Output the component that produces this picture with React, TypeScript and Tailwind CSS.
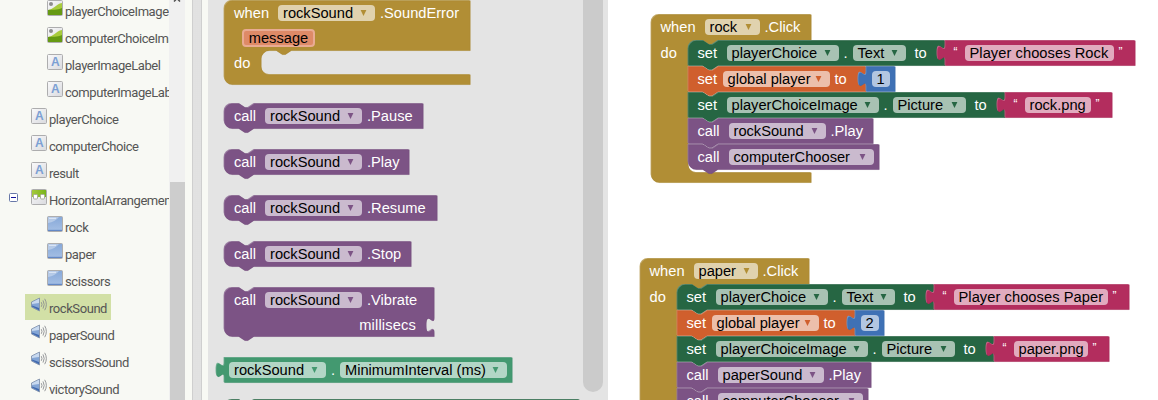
import React from "react";

type Color = "gold" | "purple" | "green" | "orange" | "pink" | "blue" | "mint";

const palette: Record<Color, { fill: string; light: string; dark: string; arrow: string }> = {
  gold: { fill: "#b18e35", light: "#c8b072", dark: "#8e722a", arrow: "text-[#b18e35]" },
  purple: { fill: "#7c5385", light: "#a387aa", dark: "#63426a", arrow: "text-[#7c5385]" },
  green: { fill: "#266643", light: "#67947b", dark: "#1e5236", arrow: "text-[#266643]" },
  orange: { fill: "#d05f2d", light: "#de8f6c", dark: "#a64c24", arrow: "text-[#d05f2d]" },
  pink: { fill: "#b32d5e", light: "#ca6c8e", dark: "#8f244b", arrow: "text-[#b32d5e]" },
  blue: { fill: "#3f71b5", light: "#799ccb", dark: "#325a91", arrow: "text-[#3f71b5]" },
  mint: { fill: "#439970", light: "#7bb89b", dark: "#367a5a", arrow: "text-[#439970]" },
};

function statementPath(w: number, h: number, roundTop = true, roundBottom = true) {
  const start = roundTop ? "M0,8 A8,8 0 0 1 8,0" : "M0,0";
  const end = roundBottom ? "H8 a8,8 0 0 1 -8,-8" : "H0";
  return `${start} H15 l6,4 h3 l6,-4 H${w} V${h} H29.5 l-6,4 h-3 l-6,-4 ${end} Z`;
}

function valuePath(w: number, h: number) {
  return `M0,0 H${w} V${h} H0 V20 c0,-10 -8,8 -8,-7.5 s8,2.5 8,-7.5 Z`;
}

function socketPath(w: number, h: number) {
  return `M0,8 A8,8 0 0 1 8,0 H15 l6,4 h3 l6,-4 H${w} V30 c0,10 -8,-8 -8,7.5 s8,-2.5 8,7.5 V${h} H29.5 l-6,4 h-3 l-6,-4 H8 a8,8 0 0 1 -8,-8 Z`;
}

function eventPath(w: number, top: number, inner: number, h: number) {
  const arm = 37;
  return `M0,8 A8,8 0 0 1 8,0 H${w} V${top} H${arm + 30} l-6,4 h-3 l-6,-4 H${arm + 8} a8,8 0 0 0 -8,8 V${inner - 8} a8,8 0 0 0 8,8 H${w} V${h} H8 a8,8 0 0 1 -8,-8 Z`;
}

function Block({ x, y, w, h, d, color, children }: {
  x: number; y: number; w: number; h: number; d: string; color: Color; children?: React.ReactNode;
}) {
  const c = palette[color];
  return (
    <div className="absolute" style={{ left: x, top: y, width: w, height: h }}>
      <svg className="absolute inset-0 overflow-visible" width={w} height={h}>
        <path d={d} fill={c.light} transform="translate(-0.4 -0.1)" />
        <path d={d} fill={c.fill} transform="translate(0.4 0.8)" />
        <path d={d} fill="none" stroke={c.dark} strokeWidth="0.5" strokeOpacity="0.35" transform="translate(0.2 0.6)" />
      </svg>
      <div className="relative">{children}</div>
    </div>
  );
}

function Row({ pad = "pl-[10px]", height = "h-[26px]", children }: { pad?: string; height?: string; children: React.ReactNode }) {
  return <div className={`flex items-center ${height} ${pad}`}>{children}</div>;
}

function Label({ className = "", children }: { className?: string; children: React.ReactNode }) {
  return <span className={`shrink-0 whitespace-pre text-white ${className}`}>{children}</span>;
}

function Field({ className, color, children }: { className: string; color?: Color; children: React.ReactNode }) {
  return (
    <span className={`flex h-4 shrink-0 items-center justify-between whitespace-pre rounded-[4px] bg-white/60 pl-[5px] pr-[8px] text-black ${className}`}>
      <span className="leading-4">{children}</span>
      {color && (
        <svg className={`shrink-0 ${palette[color].arrow}`} width="7" height="6" viewBox="0 0 7 6">
          <path d="M0.6 0H6.4L3.5 6Z" fill="currentColor" />
        </svg>
      )}
    </span>
  );
}

function CallBlock({ y, w, method }: { y: number; w: number; method: string }) {
  return (
    <Block x={224} y={y} w={w} h={25} color="purple" d={statementPath(w, 25)}>
      <Row>
        <Label className="w-[31px]">call</Label>
        <Field color="purple" className="w-[97px]">rockSound</Field>
        <Label className="ml-[5px]">{method}</Label>
      </Row>
    </Block>
  );
}

function TextValue({ x, y, w, field, children }: { x: number; y: number; w: number; field: string; children: string }) {
  return (
    <Block x={x} y={y} w={w} h={26} color="pink" d={valuePath(w, 25)}>
      <Row pad="pl-[9px]">
        <Label className="w-[11px] -translate-y-px text-[12px]">“</Label>
        <Field className={field}>{children}</Field>
        <Label className="ml-[5px] -translate-y-px text-[12px]">”</Label>
      </Row>
    </Block>
  );
}

interface HandlerProps {
  x: number;
  y: number;
  headerWidth: number;
  name: string;
  nameField: string;
  message: string;
  messageWidth: number;
  messageField: string;
  index: string;
  picture: string;
  pictureWidth: number;
  pictureField: string;
  sound: string;
  soundWidth: number;
  soundField: string;
}

function Handler(p: HandlerProps) {
  const sx = p.x + 37;
  const at = (n: number) => p.y + 26 + n * 26;
  return (
    <>
      <Block x={p.x} y={p.y} w={p.headerWidth} h={168} color="gold" d={eventPath(p.headerWidth, 26, 158, 168)}>
        <Row>
          <Label className="w-[44px]">when</Label>
          <Field color="gold" className={p.nameField}>{p.name}</Field>
          <Label className="ml-[5px]">.Click</Label>
        </Row>
        <Row height="h-[25px]"><Label>do</Label></Row>
      </Block>
      <Block x={sx} y={at(4)} w={191} h={26} color="purple" d={statementPath(191, 25, false, true)}>
        <Row>
          <Label className="w-[31px]">call</Label>
          <Field color="purple" className="w-[145px]">computerChooser</Field>
        </Row>
      </Block>
      <Block x={sx} y={at(3)} w={p.soundWidth} h={26} color="purple" d={statementPath(p.soundWidth, 25, false, false)}>
        <Row>
          <Label className="w-[31px]">call</Label>
          <Field color="purple" className={p.soundField}>{p.sound}</Field>
          <Label className="ml-[5px]">.Play</Label>
        </Row>
      </Block>
      <Block x={sx} y={at(2)} w={317} h={26} color="green" d={statementPath(317, 25, false, false)}>
        <Row>
          <Label className="w-[29px]">set</Label>
          <Field color="green" className="w-[152px]">playerChoiceImage</Field>
          <Label className="w-[14px] pl-[5px]">.</Label>
          <Field color="green" className="w-[73px]">Picture</Field>
          <Label className="ml-[9px]">to</Label>
        </Row>
      </Block>
      <TextValue x={sx + 317} y={at(2)} w={p.pictureWidth} field={p.pictureField}>{p.picture}</TextValue>
      <Block x={sx} y={at(1)} w={178} h={26} color="orange" d={statementPath(178, 25, false, false)}>
        <Row>
          <Label className="w-[25px]">set</Label>
          <Field color="orange" className="w-[107px]">global player</Field>
          <Label className="ml-[5px]">to</Label>
        </Row>
      </Block>
      <Block x={sx + 178} y={at(1)} w={29} h={26} color="blue" d={valuePath(29, 25)}>
        <Row pad="pl-[6px]">
          <Field className="w-[18px]">{p.index}</Field>
        </Row>
      </Block>
      <Block x={sx} y={at(0)} w={257} h={26} color="green" d={statementPath(257, 25, true, false)}>
        <Row>
          <Label className="w-[29px]">set</Label>
          <Field color="green" className="w-[112px]">playerChoice</Field>
          <Label className="w-[14px] pl-[5px]">.</Label>
          <Field color="green" className="w-[53px]">Text</Field>
          <Label className="ml-[9px]">to</Label>
        </Row>
      </Block>
      <TextValue x={sx + 257} y={at(0)} w={p.messageWidth} field={p.messageField}>{p.message}</TextValue>
    </>
  );
}

type IconKind = "image" | "label" | "layout" | "button" | "sound";

function TreeIcon({ kind }: { kind: IconKind }) {
  if (kind === "sound") {
    return (
      <svg width="16" height="16" viewBox="0 0 16 16" className="shrink-0">
        <path d="M0.500 5L8.500 1V14L0.500 10Z" fill="#83a5d5" stroke="#7f8ea6" strokeWidth="0.8" />
        <path d="M1 5.300L8 1.800V6L1 7Z" fill="#c8d9ef" />
        <path d="M1 9.500L8 13.300V11L1 8.500Z" fill="#4069ae" />
        <path d="M10.3 5.200Q11.700 7.500 10.3 9.800M12 3.400Q14.400 7.500 12 11.600M13.700 1.800Q17 7.500 13.700 13.200" stroke="#8b8d91" fill="none" strokeWidth="0.9" />
      </svg>
    );
  }
  return (
    <svg width="16" height="16" viewBox="0 0 16 16" className="shrink-0">
      <defs>
        <linearGradient id="plate" x2="1" y2="1"><stop stopColor="#fafafb" /><stop offset="1" stopColor="#d9dade" /></linearGradient>
        <linearGradient id="btn" x2="0" y2="1"><stop stopColor="#86a8d8" /><stop offset="1" stopColor="#a6c0e5" /></linearGradient>
        <linearGradient id="lime" x2="1" y2="0"><stop stopColor="#a5c93b" /><stop offset="1" stopColor="#79b51c" /></linearGradient>
      </defs>
      <rect x="0.5" y="0.5" width="15" height="15" rx="1" fill={kind === "button" ? "url(#btn)" : "url(#plate)"} stroke="#adadae" />
      {kind === "label" && (
        <text x="8" y="12" textAnchor="middle" fontSize="12" fontWeight="700" fill="#7b9fd4" className="font-['Liberation_Sans',sans-serif]">A</text>
      )}
      {kind === "image" && (
        <>
          <path d="M1 10C6 10 9 4 15 3V15H1Z" fill="#a8cb3c" />
          <path d="M1 10C5 9.500 10 10.500 15 8V15H1Z" fill="#669a13" />
          <circle cx="4" cy="4" r="2" fill="#8d8d8d" />
        </>
      )}
      {kind === "layout" && (
        <>
          <path d="M1 1H15V8H1Z" fill="url(#lime)" />
          <rect x="2.500" y="5.500" width="4" height="4.500" rx="1" fill="#fff" stroke="#a9ad9d" />
          <rect x="9.500" y="5.500" width="4" height="4.500" rx="1" fill="#fff" stroke="#a9ad9d" />
        </>
      )}
      {kind === "button" && (
        <>
          <path d="M1 1H12Q8 6 1 7Z" fill="#fff" fillOpacity="0.35" />
          <path d="M2 2.300H9" stroke="#e3ecf8" />
          <path d="M1 14.400H15" stroke="#6388c6" strokeWidth="1.200" />
        </>
      )}
    </svg>
  );
}

const tree: { name: string; kind: IconKind; pad: string; selected?: boolean; expander?: boolean }[] = [
  { name: "playerChoiceImage", kind: "image", pad: "pl-[47px]" },
  { name: "computerChoiceImage", kind: "image", pad: "pl-[47px]" },
  { name: "playerImageLabel", kind: "label", pad: "pl-[47px]" },
  { name: "computerImageLabel", kind: "label", pad: "pl-[47px]" },
  { name: "playerChoice", kind: "label", pad: "pl-[31px]" },
  { name: "computerChoice", kind: "label", pad: "pl-[31px]" },
  { name: "result", kind: "label", pad: "pl-[31px]" },
  { name: "HorizontalArrangement1", kind: "layout", pad: "pl-[9px]", expander: true },
  { name: "rock", kind: "button", pad: "pl-[47px]" },
  { name: "paper", kind: "button", pad: "pl-[47px]" },
  { name: "scissors", kind: "button", pad: "pl-[47px]" },
  { name: "rockSound", kind: "sound", pad: "pl-[25px]", selected: true },
  { name: "paperSound", kind: "sound", pad: "pl-[31px]" },
  { name: "scissorsSound", kind: "sound", pad: "pl-[31px]" },
  { name: "victorySound", kind: "sound", pad: "pl-[31px]" },
];

function ComponentTree() {
  return (
    <div className="h-full w-[169px] shrink-0 overflow-hidden bg-[#f8f9f4] font-[Roboto,sans-serif] text-[13px] tracking-[-0.43px] text-[#555]">
      <div className="-mt-[3px]">
        {tree.map((item) => (
          <div key={item.name} className={`flex h-[27px] items-start ${item.pad}`}>
            {item.expander && (
              <svg className="mr-[13px] mt-[7px] shrink-0" width="9" height="9" viewBox="0 0 9 9">
                <rect x="0.500" y="0.500" width="8" height="8" rx="1" fill="#fff" stroke="#6878a8" />
                <path d="M2 4.500H7" stroke="#111199" />
              </svg>
            )}
            <div className={`flex h-[26px] gap-[2px] pt-[3px] ${item.selected ? "bg-[#d2e0a6] pl-[6px] pr-[4px]" : ""}`}>
              <TreeIcon kind={item.kind} />
              <span className="whitespace-nowrap pt-[3px] leading-[18px]">{item.name}</span>
            </div>
          </div>
        ))}
      </div>
    </div>
  );
}

function Flyout() {
  return (
    <>
      <Block x={224} y={0} w={246} h={85} color="gold" d={eventPath(246, 50, 74, 84)}>
        <Row>
          <Label className="w-[44px]">when</Label>
          <Field color="gold" className="w-[97px]">rockSound</Field>
          <Label className="ml-[5px]">.SoundError</Label>
        </Row>
        <Row height="h-[23px]" pad="pl-[18px]">
          <span className="flex h-[18px] w-[73px] items-center justify-center rounded-[4px] border-2 border-[#e9ab93] bg-[#de8a67] text-black">message</span>
        </Row>
        <Row height="h-[27px]"><Label>do</Label></Row>
      </Block>
      <CallBlock y={103} w={199} method=".Pause" />
      <CallBlock y={149} w={185} method=".Play" />
      <CallBlock y={195} w={213} method=".Resume" />
      <CallBlock y={241} w={187} method=".Stop" />
      <Block x={224} y={287} w={210} h={49} color="purple" d={socketPath(210, 49)}>
        <Row>
          <Label className="w-[31px]">call</Label>
          <Field color="purple" className="w-[97px]">rockSound</Field>
          <Label className="ml-[5px]">.Vibrate</Label>
        </Row>
        <Row height="h-[24px]" pad="justify-end pr-[18px]"><Label className="tracking-[0.15px]">millisecs</Label></Row>
      </Block>
      <Block x={224} y={357} w={288} h={25} color="mint" d={valuePath(288, 25)}>
        <Row pad="pl-[5px]">
          <Field color="mint" className="w-[97px]">rockSound</Field>
          <Label className="w-[14px] pl-[5px]">.</Label>
          <Field color="mint" className="w-[167px]">MinimumInterval (ms)</Field>
        </Row>
      </Block>
      <Block x={224} y={399} w={355} h={25} color="green" d={statementPath(355, 25)} />
    </>
  );
}

export default function App() {
  return (
    <div className="relative flex h-[400px] w-[1158px] overflow-hidden bg-white">
      <ComponentTree />
      <div className="flex h-full w-4 shrink-0 flex-col bg-[#f0f0f0]">
        <svg width="16" height="182" className="shrink-0">
          <path d="M5 1.500L8 -1.500L11 1.500" fill="none" stroke="#505050" strokeWidth="1.500" />
        </svg>
        <div className="ml-px w-[15px] grow bg-[#cdcdcd]" />
      </div>
      <div className="h-full w-[7px] shrink-0 bg-[#f8f9f4]" />
      <div className="h-full w-[10px] shrink-0 border-x border-[#cfcfcf] bg-[#ebebeb] bg-[radial-gradient(#d6d6d6_0.600px,transparent_0.800px)] bg-[size:2px_2px]" />
      <div className="h-full w-[6px] shrink-0 bg-[#f8f9f4]" />
      <div className="flex h-full w-[400px] shrink-0 justify-end bg-[#e4e4e4] pr-[5px]">
        <div className="h-[392px] w-5 rounded-b-full bg-[#cbcbcb]" />
      </div>
      <div className="absolute inset-0 font-['Liberation_Sans',Arial,sans-serif] text-[14.67px] leading-[18px]">
        <Flyout />
        <Handler
          x={650.5} y={14} headerWidth={160} name="rock" nameField="w-[55px]"
          message="Player chooses Rock" messageWidth={190} messageField="w-[149px] tracking-[0.06px]"
          index="1" picture="rock.png" pictureWidth={107} pictureField="w-[66px]"
          sound="rockSound" soundWidth={185} soundField="w-[97px]"
        />
        <Handler
          x={639.5} y={258} headerWidth={169} name="paper" nameField="w-[64px]"
          message="Player chooses Paper" messageWidth={195} messageField="w-[154px] tracking-[0.06px]"
          index="2" picture="paper.png" pictureWidth={115} pictureField="w-[74px]"
          sound="paperSound" soundWidth={194} soundField="w-[106px]"
        />
      </div>
    </div>
  );
}
